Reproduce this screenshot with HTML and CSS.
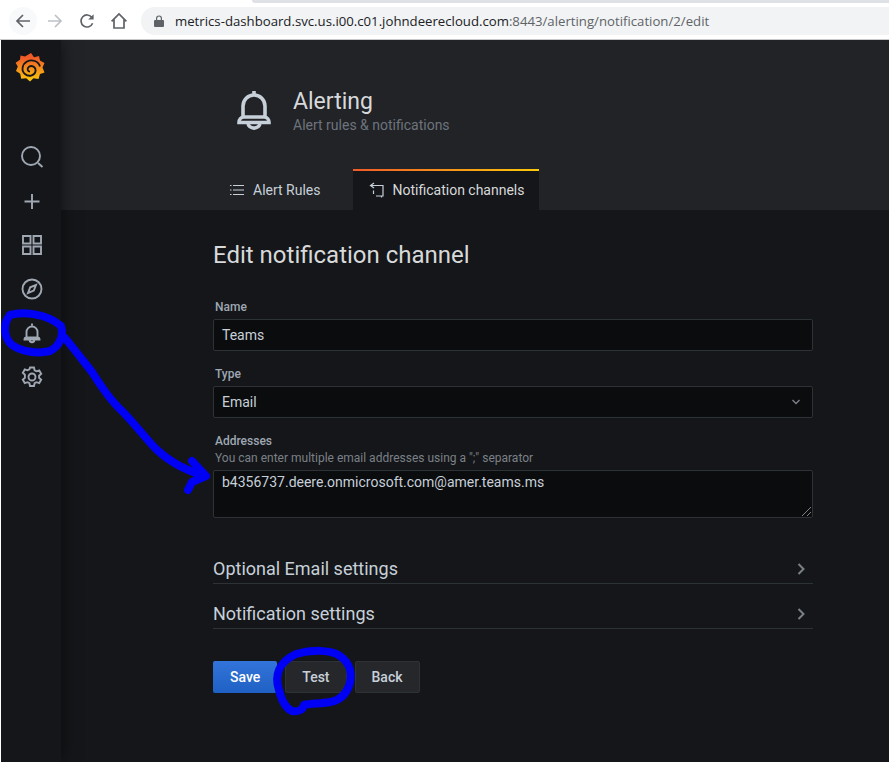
FILE: index.html
```html
<!DOCTYPE html>
<html lang="en">

<head>
  <meta charset="UTF-8">
  <title>Edit notification channel - Grafana</title>
  <link rel="stylesheet" href="styles.css">
</head>

<body>
  <div class="browser">
    <div class="tab-strip"></div>
    <div class="toolbar">
      <span class="nav-btn nav-btn-hover">
        <svg width="16" height="16" viewBox="0 0 16 16" class="chrome-icon"><path d="M15 8H2M8 2L2 8l6 6" /></svg>
      </span>
      <span class="nav-btn">
        <svg width="16" height="16" viewBox="0 0 16 16" class="chrome-icon chrome-icon-off"><path d="M1 8h13M8 2l6 6-6 6" /></svg>
      </span>
      <span class="nav-btn">
        <svg width="16" height="16" viewBox="0 0 16 16" class="chrome-icon"><path d="M13.600 10.200A6 6 0 1 1 13 4.600" /><path class="fill" d="M14.600 1.200v5.400H9.200z" /></svg>
      </span>
      <span class="nav-btn nav-btn-last">
        <svg width="18" height="18" viewBox="0 0 18 18" class="chrome-icon"><path d="M1.600 9.400L9 2l7.400 7.400M4 7.600V16h10V7.600" /></svg>
      </span>
      <div class="url-pill">
        <svg width="10" height="12" viewBox="0 0 10 12" class="lock"><path d="M2 5V3.400a3 3 0 0 1 6 0V5h1a1 1 0 0 1 1 1v5a1 1 0 0 1-1 1H1a1 1 0 0 1-1-1V6a1 1 0 0 1 1-1zm1.200 0h3.600V3.400a1.800 1.800 0 0 0-3.600 0z" /></svg>
        <span class="url">metrics-dashboard.svc.us.i00.c01.johndeerecloud.com<span class="url-path">:8443/alerting/notification/2/edit</span></span>
      </div>
    </div>
  </div>

  <div class="app">
    <nav class="sidemenu">
      <svg class="logo" width="30" height="31" viewBox="0 0 30 31">
        <defs>
          <linearGradient id="logoGrad" x1="0" y1="0" x2="0" y2="1">
            <stop offset="0.150" stop-color="#f05a28" />
            <stop offset="1" stop-color="#fbca0a" />
          </linearGradient>
        </defs>
        <path fill="url(#logoGrad)" d="M16 1l3 4.200 5-1.200 1 4.600 4.500 2.400-2 4.500 2 5-4.500 1.500-1.500 5-5-.8-3.500 3.300-3.800-3.300-5 .6-1-5L1 19l1.800-4.600L.6 10.800l4.400-3L5.500 3.400 10 4.600z" />
        <path class="logo-swirl" d="M25 14.500C23.500 9 17 7 12 9.500c-5 2.700-6 9.500-2 12.500 3.500 3 9.500 2 10.500-2.500.8-4-3.500-6.800-6.500-4.800-2.200 1.500-1.700 4.800 1 5" />
      </svg>
      <ul class="side-icons">
        <li>
          <svg width="24" height="24" viewBox="0 0 24 24"><circle cx="11" cy="11" r="9" /><path d="M18 18l4.500 4" /></svg>
        </li>
        <li>
          <svg width="24" height="24" viewBox="0 0 24 24"><path d="M12 5v15M4.500 12.500h15" /></svg>
        </li>
        <li>
          <svg width="24" height="24" viewBox="0 0 24 24"><path d="M3 3h7.500v7.500H3zM13.500 3H21v7.500h-7.500zM3 13.500h7.500V21H3zM13.500 13.500H21V21h-7.500z" /></svg>
        </li>
        <li>
          <svg width="24" height="24" viewBox="0 0 24 24"><circle cx="12" cy="12" r="9.500" /><path d="M16 8l-2.200 5.600L8 16l2.200-5.700z" /></svg>
        </li>
        <li>
          <svg width="24" height="24" viewBox="0 0 24 24"><path d="M12 2.500v2M6.500 16.500V11a5.500 5.500 0 0 1 11 0v5.500M4.500 18.500c0-1.200 1-2 2-2h11c1 0 2 .800 2 2zM9.500 18.500c0 3.600 5 3.600 5 0" /></svg>
        </li>
        <li>
          <svg width="24" height="24" viewBox="0 0 24 24"><circle cx="12" cy="12" r="3.500" /><path d="M10 2.500h4l.6 2.800 1.900 1 2.700-.9 2 3.400-2.100 1.900v2.100l2.100 1.900-2 3.400-2.700-.9-1.900 1-.6 2.800h-4l-.6-2.800-1.900-1-2.700.9-2-3.400 2.100-1.900V9.700L2.800 7.800l2-3.400 2.700.9 1.900-1z" /></svg>
        </li>
      </ul>
    </nav>

    <main class="main">
      <header class="page-header">
        <div class="header-title">
          <svg class="header-bell" width="34" height="40" viewBox="0 0 34 40"><path d="M17 1v4M6 27V16a11 11 0 0 1 22 0v11M2 32.500c0-3 2-5.500 5-5.500h20c3 0 5 2.500 5 5.500zM11 32.500c0 7.500 12 7.500 12 0" /></svg>
          <div>
            <h1>Alerting</h1>
            <div class="subtitle">Alert rules &amp; notifications</div>
          </div>
        </div>
        <div class="tabs">
          <a class="tab">
            <svg width="16" height="16" viewBox="0 0 16 16"><path d="M1 3.500h1.500M4 3.500h11M1 8h1.500M4 8h11M1 12.500h1.500M4 12.500h11" /></svg>
            Alert Rules
          </a>
          <a class="tab tab-active">
            <svg width="16" height="16" viewBox="0 0 16 16"><path d="M5 1L1.500 3.500 5 6M2 3.500h12V14H7M4.500 8.500V12M12.500 14v1.500" /></svg>
            Notification channels
          </a>
        </div>
      </header>

      <section class="page-body">
        <h2>Edit notification channel</h2>

        <div class="field">
          <label>Name</label>
          <div class="input">Teams</div>
        </div>

        <div class="field">
          <label>Type</label>
          <div class="input input-select">
            Email
            <svg width="10" height="6" viewBox="0 0 10 6"><path d="M1.500 1L5 4.500 8.500 1" /></svg>
          </div>
        </div>

        <div class="field">
          <label>Addresses</label>
          <div class="field-desc">You can enter multiple email addresses using a ";" separator</div>
          <div class="input input-area">
            b4356737.deere.onmicrosoft.com@amer.teams.ms
            <svg class="resizer" width="9" height="9" viewBox="0 0 9 9"><path d="M0 9l9-9M5 9l4-4" /></svg>
          </div>
        </div>

        <div class="collapse collapse-first">
          Optional Email settings
          <svg width="8" height="12" viewBox="0 0 8 12"><path d="M1.500 1l5 5-5 5" /></svg>
        </div>
        <div class="collapse">
          Notification settings
          <svg width="8" height="12" viewBox="0 0 8 12"><path d="M1.500 1l5 5-5 5" /></svg>
        </div>

        <div class="actions">
          <button class="btn btn-primary">Save</button>
          <button class="btn">Test</button>
          <button class="btn">Back</button>
        </div>
      </section>
    </main>
  </div>

  <!-- hand drawn marks on top of the screenshot -->
  <svg class="scribble" width="889" height="762" viewBox="0 0 889 762">
    <path d="M10 315C20 312 45 312 61 326C64 335 60 346 50 351C38 354 22 352 12 345C4 338 2 325 10 315" />
    <path d="M65 338C75 350 84 362 92 372C102 388 110 400 122 411C135 424 145 438 157 450C168 460 180 468 204 476" />
    <path d="M192 461L206 476L192 482L188 490" />
    <path d="M279 690C274 675 279 662 296 654C310 650 330 649 340 656C350 663 353 674 349 686C345 696 338 701 330 702C320 704 312 703 304 705C303 710 298 712 292 711C285 708 281 698 279 690" />
  </svg>
</body>

</html>
```

FILE: styles.css
```css
* {
  box-sizing: border-box;
}

body {
  margin: 0;
  height: 762px;
  overflow: hidden;
  background: #fff;
  font-family: "Roboto", "Liberation Sans", sans-serif;
  color: #d8d9da;
  position: relative;
}

/* browser chrome */
.browser {
  height: 40px;
  background: #fff;
  border-bottom: 1px solid #c8c9cb;
}

.tab-strip {
  height: 3px;
  margin-left: 252px;
  background: #dee1e6;
  border-bottom-left-radius: 3px;
}

.toolbar {
  display: flex;
  align-items: center;
  height: 36px;
  padding-left: 9px;
}

.nav-btn {
  width: 28px;
  height: 28px;
  margin-right: 4px;
  border-radius: 50%;
  display: flex;
  align-items: center;
  justify-content: center;
}

.nav-btn-hover {
  background: #f8f9fa;
}

.nav-btn-last {
  margin-right: 8px;
}

.chrome-icon {
  fill: none;
  stroke: #5f6368;
  stroke-width: 1.700;
}

.chrome-icon .fill {
  fill: #5f6368;
  stroke: none;
}

.chrome-icon-off {
  stroke: #bdc1c6;
}

.url-pill {
  flex: 1;
  height: 28px;
  padding-left: 13px;
  display: flex;
  align-items: center;
  background: #f1f3f4;
  border-radius: 14px 0 0 14px;
}

.lock {
  fill: #5f6368;
  margin-right: 11px;
}

.url {
  font-family: "Open Sans", "Liberation Sans", sans-serif;
  font-size: 13.200px;
  color: #202124;
  white-space: nowrap;
}

.url-path {
  color: #5f6368;
}

/* grafana shell */
.app {
  display: flex;
  height: 722px;
  margin-left: 1px;
  background: #141619;
  overflow: hidden;
}

.sidemenu {
  width: 60px;
  flex-shrink: 0;
  background: #141619;
  box-shadow: 0 0 16px rgba(0, 0, 0, 0.55);
  position: relative;
  z-index: 1;
  display: flex;
  flex-direction: column;
  align-items: center;
}

.logo {
  margin-top: 12px;
  margin-left: -3px;
}

.logo-swirl {
  fill: none;
  stroke: #141619;
  stroke-width: 1.800;
}

.side-icons {
  list-style: none;
  margin: 52px 0 0;
  padding: 0;
}

.side-icons li {
  height: 44px;
  display: flex;
  align-items: center;
  justify-content: center;
  margin-left: 2px;
}

.side-icons svg {
  fill: none;
  stroke: #9fa7b3;
  stroke-width: 1.900;
}

.main {
  flex: 1;
}

.page-header {
  height: 170px;
  padding-left: 152px;
  background: #212327;
  display: flex;
  flex-direction: column;
  justify-content: flex-end;
}

.header-title {
  display: flex;
  align-items: center;
  gap: 22px;
  margin-left: 24px;
  margin-bottom: 34px;
}

.header-bell {
  fill: none;
  stroke: #c7d0d9;
  stroke-width: 3.600;
  margin-top: -4px;
}

h1 {
  margin: 0;
  font-size: 23px;
  font-weight: 400;
  line-height: 28px;
  color: #d8d9da;
}

.subtitle {
  font-size: 14px;
  line-height: 20px;
  margin-top: -1px;
  color: #6e747c;
}

.tabs {
  display: flex;
  gap: 16px;
}

.tab {
  height: 41px;
  padding: 0 16px;
  display: flex;
  align-items: center;
  gap: 8px;
  font-size: 14px;
  color: #c7d0d9;
}

.tab svg {
  fill: none;
  stroke: #c7d0d9;
  stroke-width: 1.200;
}

.tab-active {
  padding-right: 14px;
  padding-bottom: 2px;
  background: linear-gradient(#141619, #141619) padding-box,
    linear-gradient(90deg, #f05a28, #fbca0a) border-box;
  border-top: 2px solid transparent;
  color: #d8d9da;
}

.page-body {
  padding: 30px 76px 0 152px;
}

h2 {
  margin: 0 0 30px;
  font-size: 24px;
  font-weight: 400;
  line-height: 30px;
  color: #d8d9da;
}

.field {
  margin-bottom: 16px;
}

.field label {
  display: block;
  padding-left: 2px;
  margin-bottom: 5px;
  font-size: 12px;
  line-height: 14px;
  font-weight: 500;
  color: #9fa7b3;
}

.field-desc {
  padding-left: 2px;
  margin-top: -2px;
  margin-bottom: 5px;
  font-size: 12px;
  line-height: 14px;
  color: #7b8087;
}

.input {
  height: 32px;
  padding: 0 8px;
  display: flex;
  align-items: center;
  justify-content: space-between;
  font-size: 14px;
  color: #c7d0d9;
  background: #0b0c0e;
  border: 1px solid #2c3235;
  border-radius: 2px;
}

.input-select svg {
  fill: none;
  stroke: #7b8087;
  stroke-width: 1.400;
  margin-right: 3px;
}

.input-area {
  height: 48px;
  padding-top: 3px;
  align-items: flex-start;
  position: relative;
}

.resizer {
  position: absolute;
  right: 1px;
  bottom: 1px;
  fill: none;
  stroke: #a0a0a0;
  stroke-width: 0.800;
}

.collapse {
  height: 45px;
  padding-top: 14px;
  padding-right: 8px;
  display: flex;
  align-items: center;
  justify-content: space-between;
  font-size: 18px;
  color: #c7d0d9;
  border-bottom: 1px solid #2c3235;
}

.collapse-first {
  margin-top: 21px;
}

.collapse svg {
  fill: none;
  stroke: #7b8087;
  stroke-width: 2;
  margin-top: 2px;
}

.actions {
  display: flex;
  gap: 8px;
  margin-top: 32px;
}

.btn {
  height: 32px;
  padding: 0 16px;
  font-family: inherit;
  font-size: 14px;
  font-weight: 500;
  color: #c7d0d9;
  background: #25272b;
  border: 1px solid #2c3235;
  border-radius: 2px;
}

.btn-primary {
  padding: 0 17px;
  color: #fff;
  background: linear-gradient(#3274d9, #1f60c4);
  border: none;
}

/* blue pen */
.scribble {
  position: absolute;
  left: 0;
  top: 0;
  z-index: 2;
  fill: none;
  stroke: #0000f5;
  stroke-width: 8;
  stroke-linecap: round;
  stroke-linejoin: round;
}
```
